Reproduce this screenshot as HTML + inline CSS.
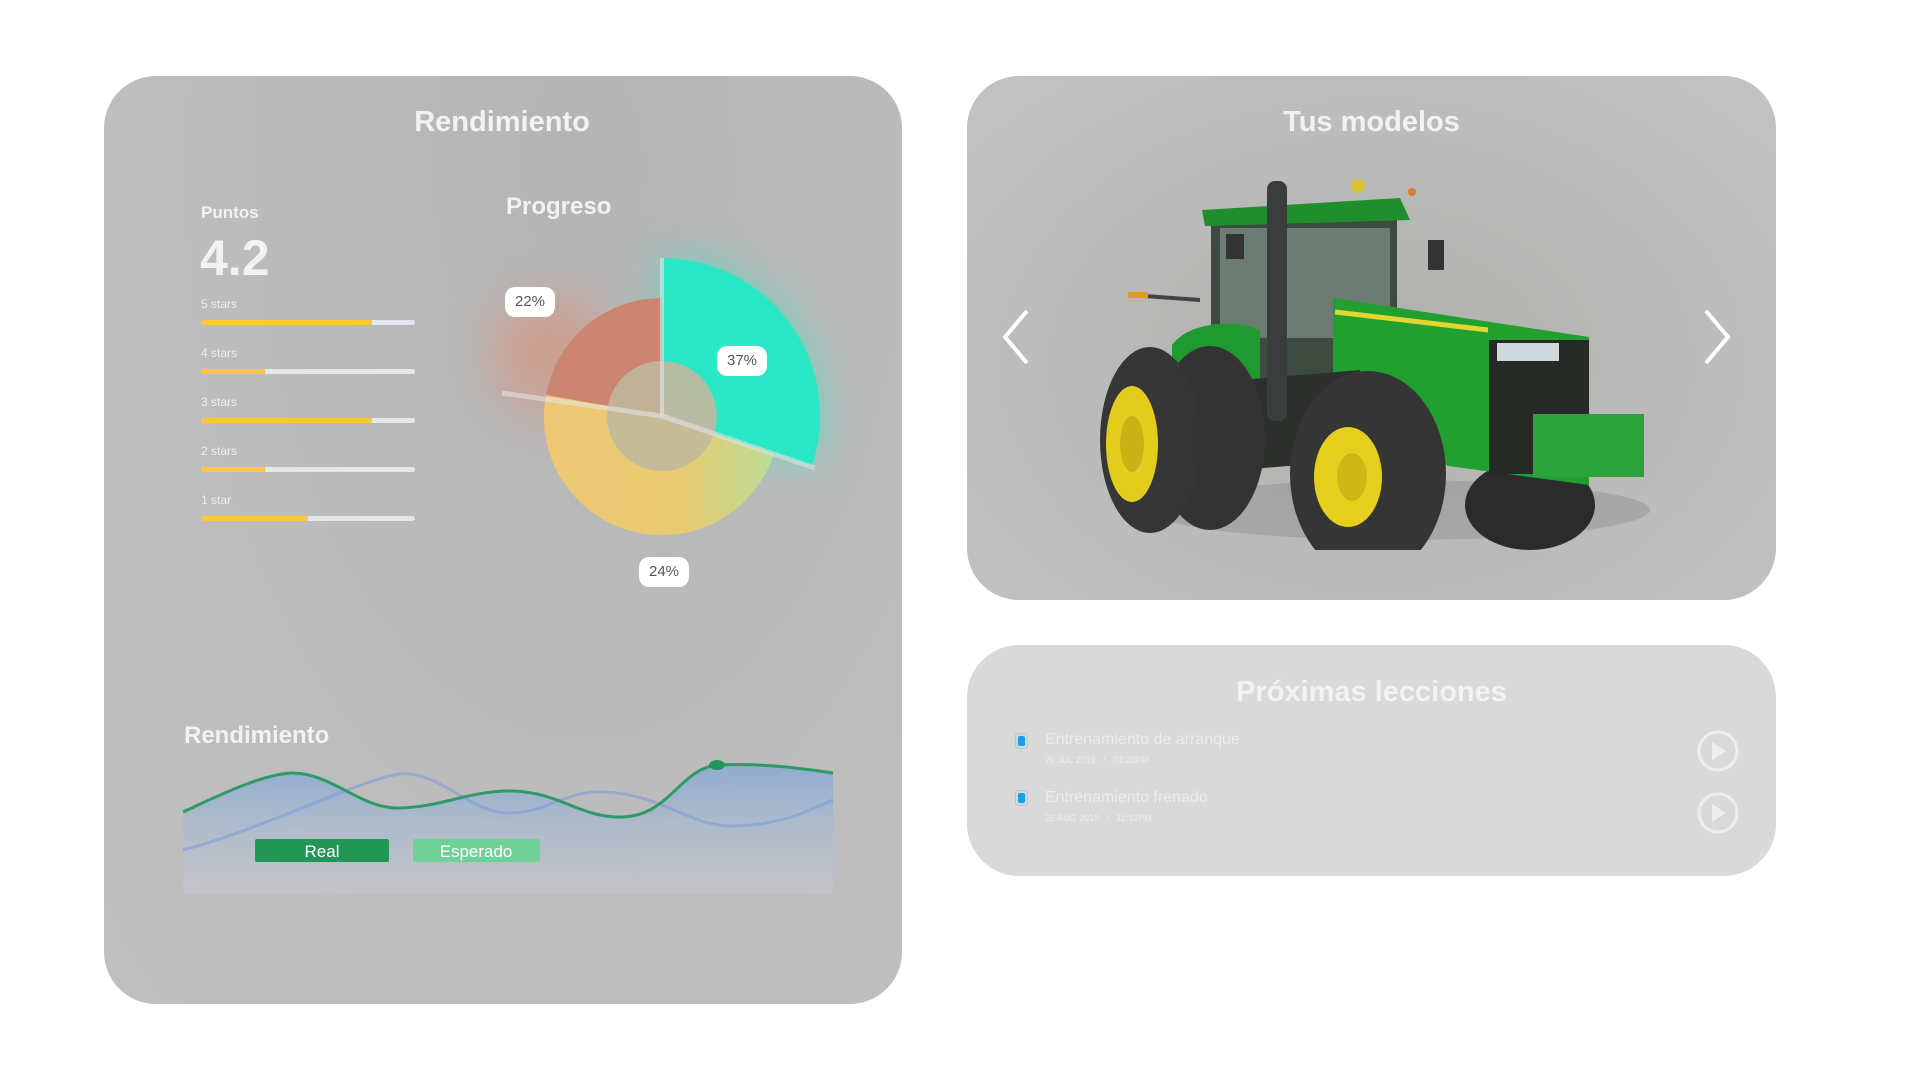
<!DOCTYPE html>
<html><head><meta charset="utf-8"><style>
*{margin:0;padding:0;box-sizing:border-box}
body{width:1920px;height:1080px;background:#fff;font-family:"Liberation Sans",sans-serif;position:relative;overflow:hidden}
.card{position:absolute;border-radius:52px;overflow:hidden}
.t{position:absolute;color:#f2f2f2;font-weight:bold;white-space:nowrap}
.lbl{position:absolute;background:#fff;border-radius:10px;color:#555;font-size:15px;text-align:center;line-height:30px;height:30px;width:50px}
.bar{position:absolute;left:201px;width:214px;height:5px;background:#e4e7ec;border-radius:3px}
.bar i{display:block;height:5px;background:#fcc73f;border-radius:3px 0 0 3px}
.sl{position:absolute;left:201px;color:#eee;font-size:12px}
</style></head><body>

<div class="card" style="left:104px;top:76px;width:798px;height:928px;background:radial-gradient(ellipse at 60% 10%,#b4b4b4,#bdbdbd 60%,#bfbfbf)"></div>
<div class="t" style="left:0;width:1004px;text-align:center;top:106px;font-size:29px">Rendimiento</div>
<div class="t" style="left:201px;top:203px;font-size:17px">Puntos</div>
<div class="t" style="left:200px;top:229px;font-size:50px">4.2</div>

<div class="sl" style="top:297px">5 stars</div><div class="bar" style="top:320px"><i style="width:80%"></i></div>
<div class="sl" style="top:346px">4 stars</div><div class="bar" style="top:369px"><i style="width:30%"></i></div>
<div class="sl" style="top:395px">3 stars</div><div class="bar" style="top:418px"><i style="width:80%"></i></div>
<div class="sl" style="top:444px">2 stars</div><div class="bar" style="top:467px"><i style="width:30%"></i></div>
<div class="sl" style="top:493px">1 star</div><div class="bar" style="top:516px"><i style="width:50%"></i></div>

<div class="t" style="left:506px;top:193px;font-size:24px">Progreso</div>

<svg style="position:absolute;left:0;top:0" width="1000" height="1000">
<defs>
<filter id="bl" x="-50%" y="-50%" width="200%" height="200%"><feGaussianBlur stdDeviation="22"/></filter>
<linearGradient id="yg" x1="0" y1="0" x2="1" y2="0"><stop offset="0" stop-color="#eec775"/><stop offset=".6" stop-color="#e8cb72"/><stop offset="1" stop-color="#b9dc96"/></linearGradient>
</defs>
<circle cx="550" cy="355" r="60" fill="#e08a70" opacity=".5" filter="url(#bl)"/>
<path d="M662 258 A158 158 0 0 1 812 466 L662 416Z" fill="#2ee8c4" opacity=".55" filter="url(#bl)"/>
<path d="M662 416 L662 298 A118 118 0 0 0 546 395 Z" fill="#cc8570"/>
<path d="M662 416 L546 395 A118 118 0 0 0 774 454 Z" fill="url(#yg)"/>
<circle cx="662" cy="416" r="55" fill="#bfb9a0" opacity=".85"/>
<path d="M662 258 A158 158 0 0 1 812 466 L714 433 A55 55 0 0 0 662 361 Z" fill="#2ae8c5"/>
<line x1="662" y1="258" x2="662" y2="416" stroke="#e6e6e6" stroke-width="4" opacity=".6"/>
<line x1="502" y1="393" x2="662" y2="416" stroke="#e6e6e6" stroke-width="5" opacity=".55"/>
<line x1="662" y1="416" x2="815" y2="468" stroke="#e6e6e6" stroke-width="5" opacity=".55"/>
</svg>
<div class="lbl" style="left:505px;top:287px">22%</div>
<div class="lbl" style="left:717px;top:346px">37%</div>
<div class="lbl" style="left:639px;top:557px">24%</div>

<div class="t" style="left:184px;top:722px;font-size:24px">Rendimiento</div>
<svg style="position:absolute;left:180px;top:730px" width="680" height="190">
<defs>
<linearGradient id="ag" x1="0" y1="0" x2="0" y2="1"><stop offset="0" stop-color="#7fa6d6" stop-opacity=".75"/><stop offset="1" stop-color="#c8cdd6" stop-opacity=".35"/></linearGradient>
</defs>
<path d="M3 82 C40 65 80 45 111 43 C150 42 180 78 217 78 C260 78 290 60 332 61 C380 62 400 88 442 87 C490 86 500 38 538 35 C580 33 620 38 653 43 L653 163 L3 163Z" fill="url(#ag)"/>
<path d="M3 120 C80 100 180 50 219 44 C260 40 290 84 330 83 C370 82 385 60 425 62 C480 64 510 96 551 96 C600 96 630 80 653 70" fill="none" stroke="#7d9cd8" stroke-width="3" opacity=".6"/>
<path d="M3 82 C40 65 80 45 111 43 C150 42 180 78 217 78 C260 78 290 60 332 61 C380 62 400 88 442 87 C490 86 500 38 538 35 C580 33 620 38 653 43" fill="none" stroke="#2e9a66" stroke-width="3"/>
<ellipse cx="537" cy="35" rx="8" ry="5" fill="#21955a"/>
<rect x="75" y="109" width="134" height="23" rx="2" fill="#229755"/>
<text x="142" y="127" text-anchor="middle" fill="#fff" font-size="17" font-family="Liberation Sans">Real</text>
<rect x="233" y="109" width="127" height="23" rx="2" fill="#6fd098"/>
<text x="296" y="127" text-anchor="middle" fill="#fff" font-size="17" font-family="Liberation Sans">Esperado</text>
</svg>

<div class="card" style="left:967px;top:76px;width:809px;height:524px;background:radial-gradient(ellipse at 50% 55%,#aeb0ab,#bbbbbb 55%,#c3c3c3)"></div>
<div class="t" style="left:967px;width:809px;text-align:center;top:106px;font-size:29px">Tus modelos</div>
<svg style="position:absolute;left:995px;top:305px" width="40" height="64"><path d="M32 6 L10 32 L32 58" fill="none" stroke="#fff" stroke-width="4"/></svg>
<svg style="position:absolute;left:1698px;top:305px" width="40" height="64"><path d="M8 6 L30 32 L8 58" fill="none" stroke="#fff" stroke-width="4"/></svg>

<svg style="position:absolute;left:1100px;top:170px" width="580" height="380">
<g>
<ellipse cx="300" cy="340" rx="250" ry="30" fill="#8a8a8a" opacity=".4"/>
<ellipse cx="430" cy="335" rx="65" ry="45" fill="#2b2b2b"/>
<rect x="111" y="50" width="186" height="160" fill="#3c4a40"/>
<rect x="120" y="58" width="170" height="110" fill="#6b7d72"/>
<path d="M102 40 L300 28 L310 50 L105 56Z" fill="#1f8f2e"/>
<rect x="126" y="64" width="18" height="25" fill="#333"/>
<rect x="328" y="70" width="16" height="30" fill="#333"/>
<circle cx="258" cy="16" r="7" fill="#d8c233"/>
<circle cx="312" cy="22" r="4" fill="#e07a2c"/>
<path d="M30 125 L100 130" stroke="#444" stroke-width="4"/>
<rect x="28" y="122" width="20" height="6" fill="#e09a2a"/>
<path d="M72 175 C90 150 140 150 160 160 L160 210 L72 210Z" fill="#1e9a30"/>
<path d="M233 128 L489 167 L489 315 L348 296 L233 207Z" fill="#21a030"/>
<path d="M235 142 L388 160" stroke="#e5d530" stroke-width="5"/>
<rect x="389" y="170" width="100" height="134" fill="#262a26"/>
<rect x="397" y="173" width="62" height="18" fill="#cfd8de"/>
<path d="M433 244 L544 244 L544 307 L433 307Z" fill="#2ba23a"/>
<path d="M140 210 L260 200 L260 290 L140 300Z" fill="#2c2f2c"/>
<rect x="167" y="11" width="20" height="240" rx="8" fill="#3b3d3c"/>
<ellipse cx="110" cy="268" rx="55" ry="92" fill="#333"/>
<ellipse cx="50" cy="270" rx="50" ry="93" fill="#363636"/>
<ellipse cx="32" cy="274" rx="26" ry="58" fill="#e4cc1c"/>
<ellipse cx="32" cy="274" rx="12" ry="28" fill="#c9b418"/>
<ellipse cx="268" cy="304" rx="78" ry="103" fill="#353535"/>
<ellipse cx="248" cy="307" rx="34" ry="50" fill="#e6cf1c"/>
<ellipse cx="252" cy="307" rx="15" ry="24" fill="#cdb716"/>
</g>
</svg>

<div class="card" style="left:967px;top:645px;width:809px;height:231px;background:#d9d9d9"></div>
<div class="t" style="left:967px;width:809px;text-align:center;top:676px;font-size:29px">Próximas lecciones</div>
<div style="position:absolute;left:1015px;top:733px;width:13px;height:16px;border:1px solid #b8c7d3;border-radius:3px;background:#d2d7dc"><div style="margin:2px;height:10px;background:#1aa0ea;border-radius:2px"></div></div>
<div style="position:absolute;left:1045px;top:731px;color:#ececec;font-size:16px">Entrenamiento de arranque</div>
<div style="position:absolute;left:1045px;top:755px;color:#ececec;font-size:9px">29 JUL 2019 &nbsp; / &nbsp; 03:23PM</div>
<div style="position:absolute;left:1015px;top:790px;width:13px;height:16px;border:1px solid #b8c7d3;border-radius:3px;background:#d2d7dc"><div style="margin:2px;height:10px;background:#1aa0ea;border-radius:2px"></div></div>
<div style="position:absolute;left:1045px;top:789px;color:#ececec;font-size:16px">Entrenamiento frenado</div>
<div style="position:absolute;left:1045px;top:813px;color:#ececec;font-size:9px">26 AUG 2019 &nbsp; / &nbsp; 11:12PM</div>
<svg style="position:absolute;left:1694px;top:726px" width="48" height="120">
<circle cx="24" cy="25" r="19" fill="none" stroke="#eee" stroke-width="3"/><path d="M18 16 L32 25 L18 34Z" fill="#eee"/>
<circle cx="24" cy="87" r="19" fill="none" stroke="#eee" stroke-width="3"/><path d="M18 78 L32 87 L18 96Z" fill="#eee"/>
</svg>
</body></html>
